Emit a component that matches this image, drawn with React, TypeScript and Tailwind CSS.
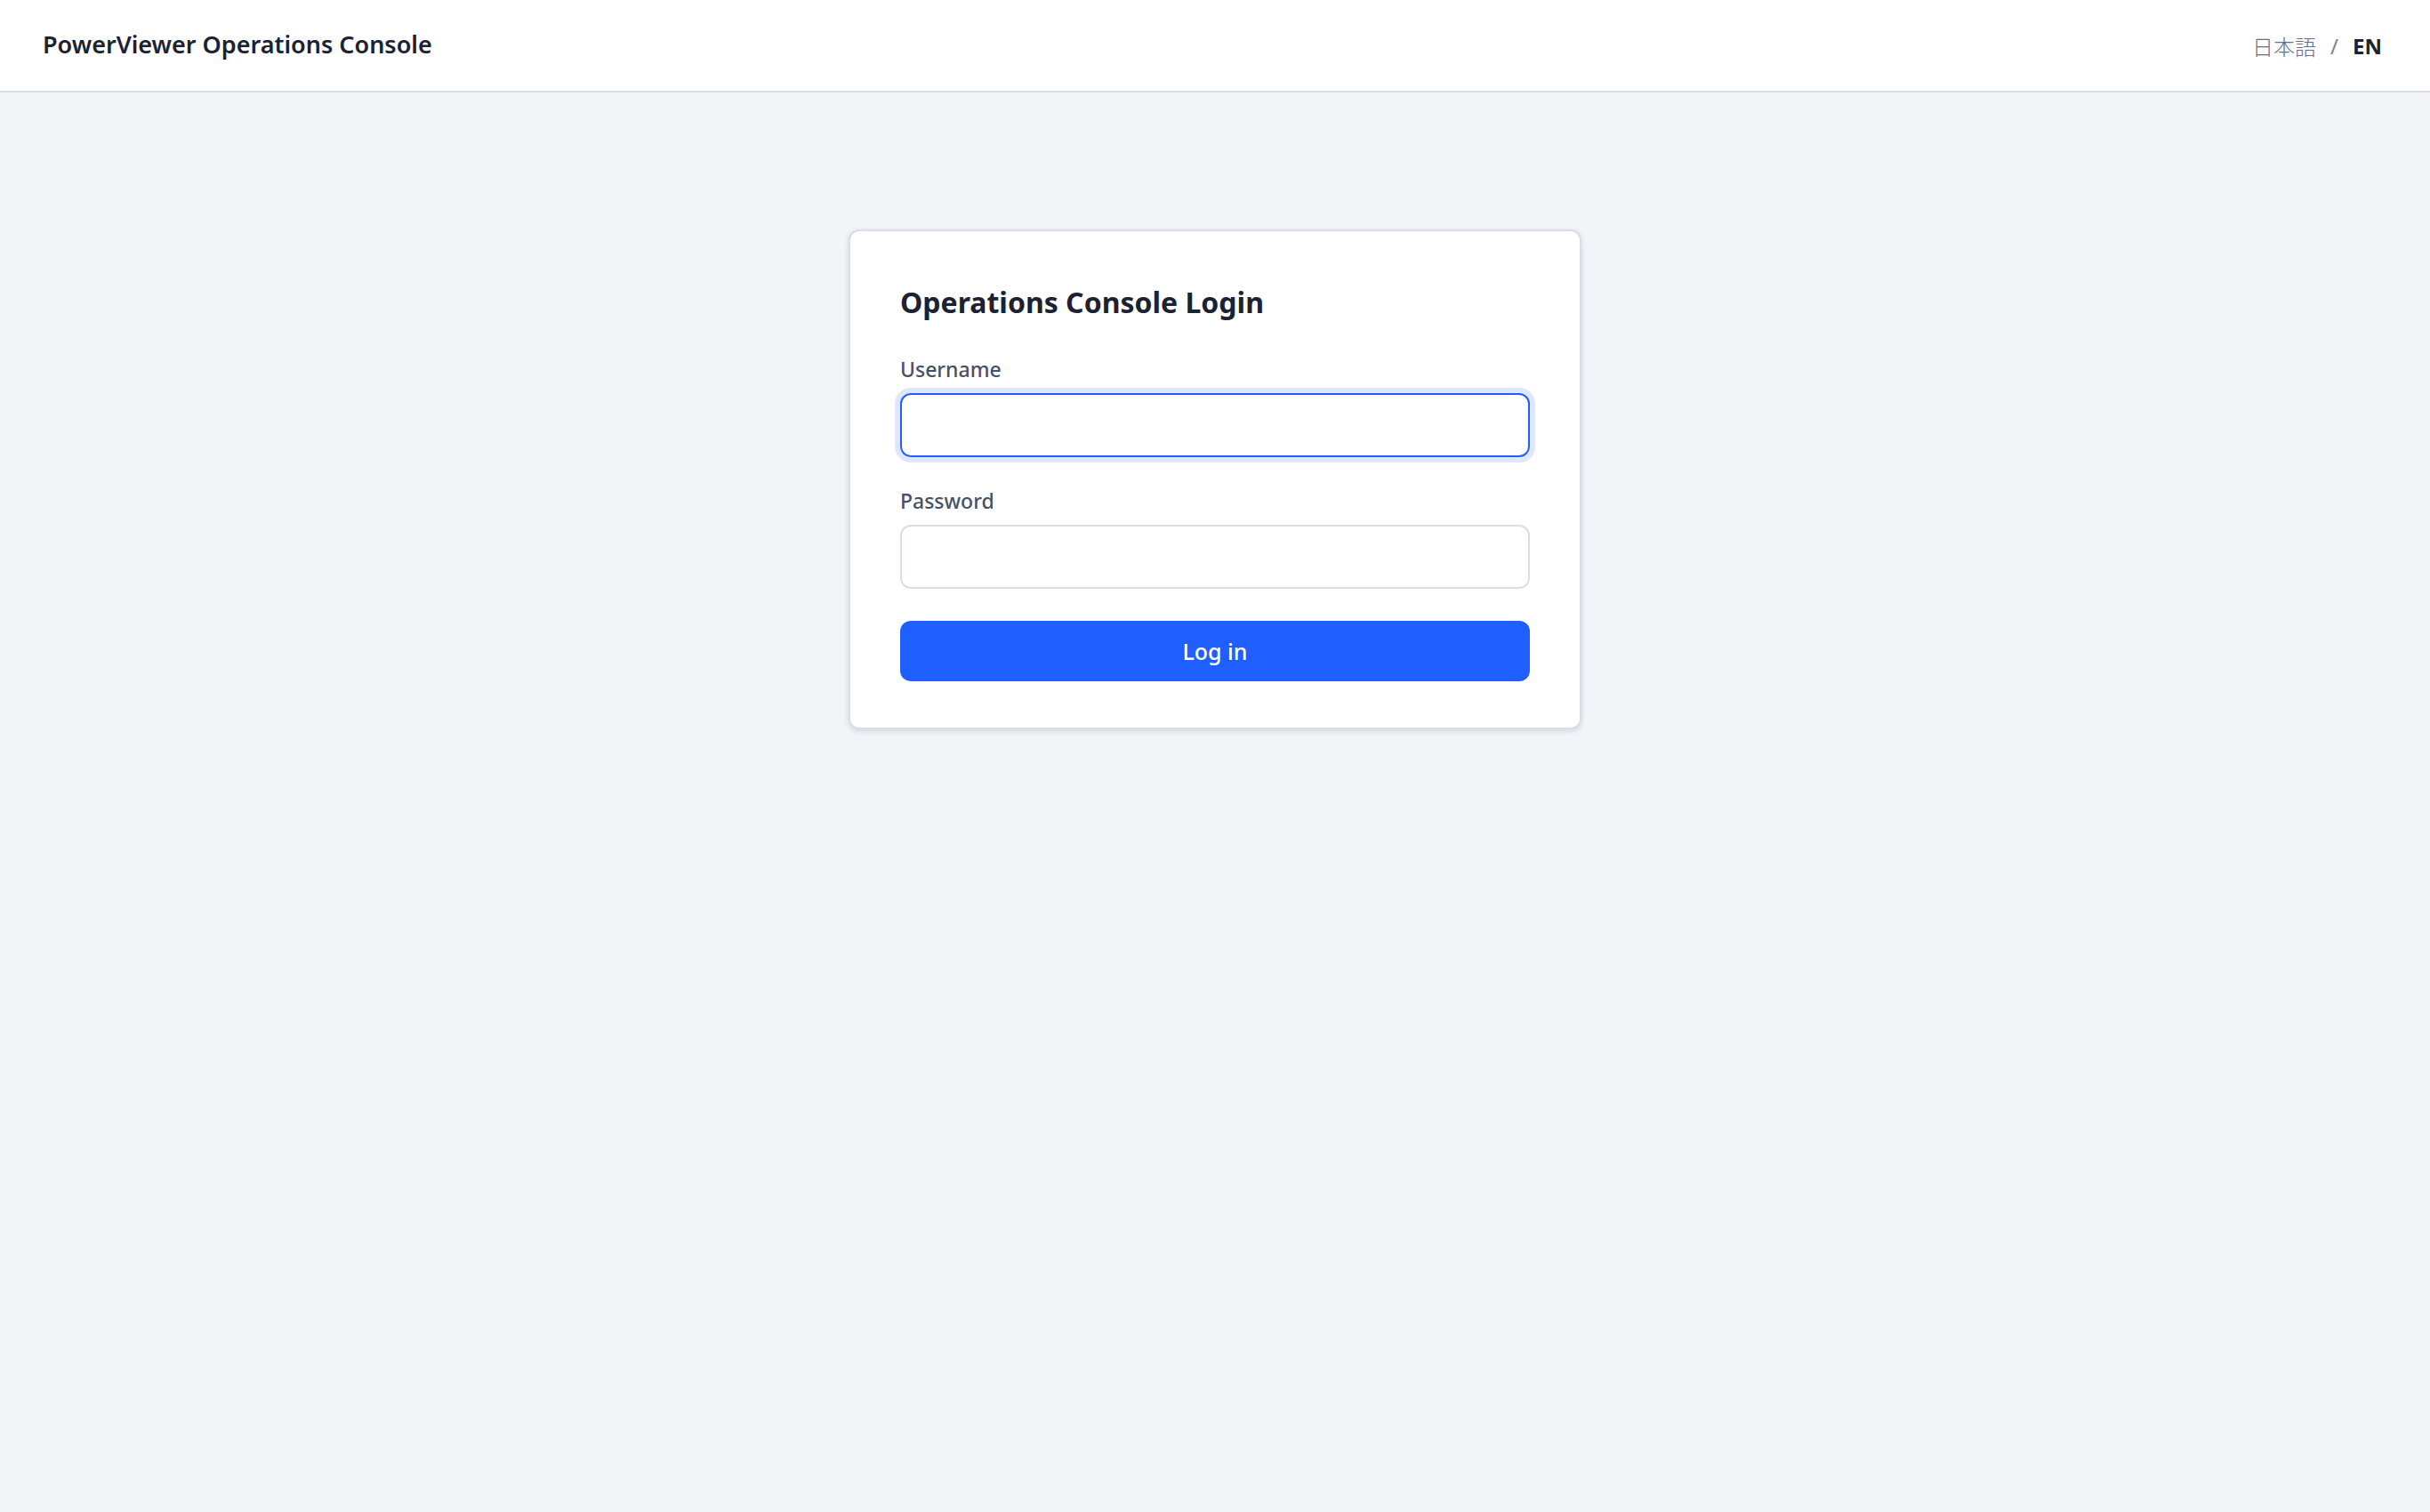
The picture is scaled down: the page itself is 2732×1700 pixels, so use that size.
import React from "react";

type FieldProps = {
  id: string;
  label: string;
  type: "text" | "password";
  autoFocus?: boolean;
};

function Field({ id, label, type, autoFocus }: FieldProps) {
  return (
    <div className="mb-9 flex flex-col">
      <label
        htmlFor={id}
        className="mb-3.5 self-start text-[23px] leading-[26px] font-medium text-[#475069]"
      >
        {label}
      </label>
      <input
        id={id}
        name={id}
        type={type}
        autoFocus={autoFocus}
        className="h-18 w-full rounded-xl border-2 border-[#d9ddea] bg-white px-5 text-[25px] text-[#1a2233] caret-transparent outline-none focus:border-[#1f5fff] focus:ring-[6px] focus:ring-[#dfe7ff]"
      />
    </div>
  );
}

function LanguageSwitch() {
  return (
    <nav aria-label="Language" className="flex items-center gap-4 pt-0.5 text-[24px] leading-8">
      <a href="#ja" lang="ja" className="font-['Noto_Sans_CJK_JP',sans-serif] font-light text-[#666e8c]">
        日本語
      </a>
      <span className="text-[#7a829a]">/</span>
      <a href="#en" className="font-bold text-[#1a2233]">
        EN
      </a>
    </nav>
  );
}

export default function App() {
  return (
    <div className="min-h-screen bg-[#f2f4f8] font-['Noto_Sans','Noto_Sans_CJK_JP',sans-serif]">
      <header className="flex h-26 items-center justify-between border-b-2 border-[#d9dbe9] bg-white pr-[54px] pl-12">
        <h1 className="pb-0.5 text-[27px] leading-9 font-semibold text-[#1a2233]">
          PowerViewer Operations Console
        </h1>
        <LanguageSwitch />
      </header>
      <main className="flex justify-center px-6 pt-[154px]">
        <form
          onSubmit={(e) => e.preventDefault()}
          className="w-full max-w-[824px] rounded-xl border-2 border-[#d9ddea] bg-white px-14 pt-13 pb-13 shadow-[0_2px_6px_rgba(20,30,60,0.14)]"
        >
          <h2 className="mb-[34px] text-[32px] leading-14 font-bold text-[#1a2233]">
            Operations Console Login
          </h2>
          <Field id="username" label="Username" type="text" autoFocus />
          <Field id="password" label="Password" type="password" />
          <button
            type="submit"
            className="h-17 w-full rounded-xl bg-[#1f5fff] text-[25px] leading-8 font-medium text-white"
          >
            Log in
          </button>
        </form>
      </main>
    </div>
  );
}
